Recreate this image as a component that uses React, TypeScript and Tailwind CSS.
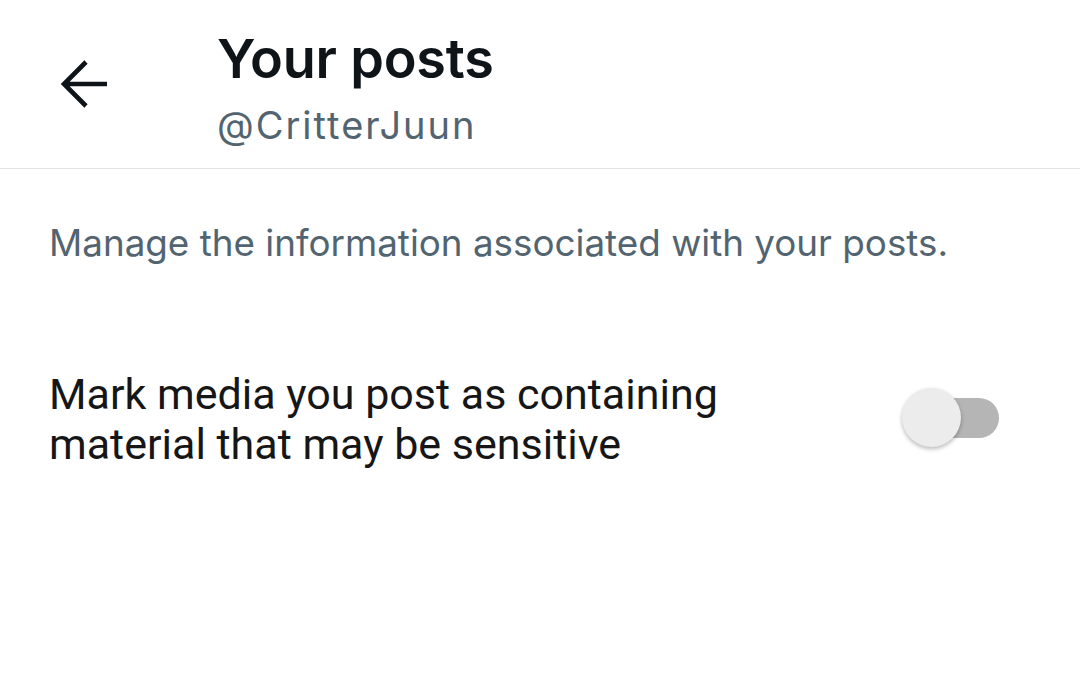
import React from "react";

function BackArrow() {
  return (
    <svg width="52" height="50" viewBox="0 0 52 50" fill="none" className="block">
      <path d="M48 24H5M27 2L5 24l22 22" stroke="#0f1419" strokeWidth="4.6" strokeLinecap="butt" strokeLinejoin="miter" />
    </svg>
  );
}

function Toggle() {
  return (
    <div className="relative w-[98px] h-[62px] mb-[2px] flex items-center justify-end">
      <div className="w-[82px] h-[40px] rounded-full bg-[#b5b5b5]" />
      <div className="absolute left-[1px] top-[1px] w-[59px] h-[59px] rounded-full bg-[#ececec] shadow-[0_2px_4px_rgba(0,0,0,0.28)]" />
    </div>
  );
}

export default function App() {
  return (
    <div className="w-[1080px] h-[680px] bg-white overflow-hidden">
      <header className="h-[169px] border-b border-[#e1e3e5] flex">
        <div className="pl-[59px] pt-[60px] w-[217px]">
          <BackArrow />
        </div>
        <div className="flex flex-col pt-[29px]" style={{ fontFamily: "Inter, 'Noto Sans', sans-serif" }}>
          <h1 className="text-[54px] leading-[60px] font-semibold text-[#0f1419] tracking-[-0.2px]">Your posts</h1>
          <div className="mt-[14px] text-[38px] leading-[44px] tracking-[2px] text-[#536471]">@CritterJuun</div>
        </div>
      </header>
      <p
        className="pl-[49px] pt-[52px] text-[36.8px] leading-[44px] text-[#536471]"
        style={{ fontFamily: "Inter, 'Noto Sans', sans-serif" }}
      >
        Manage the information associated with your posts.
      </p>
      <div className="mt-[104px] pl-[49px] pr-[81px] flex items-center justify-between">
        <div className="text-[43px] leading-[50px] text-[#161616]" style={{ fontFamily: "Roboto, sans-serif" }}>
          Mark media you post as containing
          <br />
          material that may be sensitive
        </div>
        <Toggle />
      </div>
    </div>
  );
}
